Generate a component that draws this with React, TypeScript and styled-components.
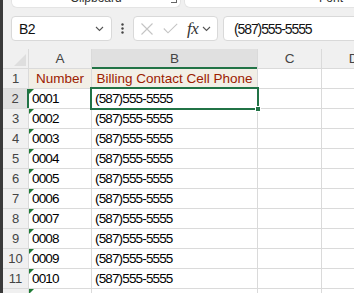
import React from 'react'
import styled, { createGlobalStyle, css } from 'styled-components'

const GRID = '#dadada'
const GREEN = '#217346'

const GlobalStyle = createGlobalStyle`
  html, body {
    margin: 0;
    padding: 0;
    overflow: hidden;
  }
  body {
    font-family: "Liberation Sans", Arial, sans-serif;
    background: #f0f0f0;
  }
`

const Page = styled.div`
  display: flex;
  width: 100vw;
  height: 100vh;
  overflow: hidden;
  background: #f0f0f0;
`

const SideStrip = styled.div`
  width: 3px;
  flex-shrink: 0;
  background: #3a3a3a;
`

const Main = styled.div`
  flex: 1;
  min-width: 0;
  display: flex;
  flex-direction: column;
  overflow: hidden;
`

const Ribbon = styled.div`
  height: 8px;
  display: flex;
  gap: 3px;
  padding-left: 8px;
  flex-shrink: 0;
`

const RibbonGroup = styled.div<{ $width: number }>`
  position: relative;
  width: ${p => p.$width}px;
  flex-shrink: 0;
  height: 8px;
  background: #fff;
  border: 1px solid #e4e4e4;
  border-top: none;
  border-radius: 0 0 6px 6px;
  box-sizing: border-box;
  display: flex;
  justify-content: center;
  align-items: flex-end;
  overflow: hidden;
`

const RibbonLabel = styled.span`
  font-size: 12px;
  line-height: 12px;
  margin-bottom: 3px;
  color: #333;
  white-space: nowrap;
`

const Launcher = styled.span`
  position: absolute;
  right: 3px;
  top: -3px;
  width: 5px;
  height: 5px;
  border-right: 1px solid #666;
  border-bottom: 1px solid #666;
`

const FormulaBar = styled.div`
  margin-top: 8px;
  height: 25px;
  display: flex;
  align-items: center;
  padding-left: 8px;
  flex-shrink: 0;
`

const Field = styled.div`
  height: 25px;
  box-sizing: border-box;
  background: #fff;
  border: 1px solid #d9d9d9;
  border-radius: 4px;
  display: flex;
  align-items: center;
`

const NameBox = styled(Field)`
  width: 101px;
  justify-content: space-between;
  padding: 0 7px;
  font-size: 14px;
  letter-spacing: -0.5px;
  color: #111;
`

const Dots = styled.div`
  width: 21px;
  display: flex;
  justify-content: center;
`

const FuncBox = styled(Field)`
  width: 85px;
  padding: 0 4px 0 6px;
`

const FxText = styled.span`
  font-family: "Liberation Serif", "Times New Roman", serif;
  font-style: italic;
  font-size: 17px;
  color: #333;
  margin-left: 9px;
  letter-spacing: -0.5px;
`

const FormulaInput = styled(Field)`
  flex: 1;
  margin-left: 5px;
  margin-right: -12px;
  padding-left: 10px;
  font-size: 14px;
  letter-spacing: -1.1px;
  color: #111;
`

const Sheet = styled.div`
  margin-top: 8px;
  display: grid;
  grid-template-columns: 25px 62px 165px 63px 63px;
  grid-auto-rows: 19px;
  gap: 1px;
  background: ${GRID};
`

const Corner = styled.div`
  position: relative;
  background: #f0f0f0;
  &::after {
    content: '';
    position: absolute;
    right: 2px;
    bottom: 2px;
    width: 12px;
    height: 12px;
    background: #dedede;
    clip-path: polygon(100% 0, 100% 100%, 0 100%);
  }
`

const ColHead = styled.div<{ $selected?: boolean }>`
  background: ${p => (p.$selected ? '#e0e0e0' : '#f0f0f0')};
  color: #444;
  font-size: 13.5px;
  display: flex;
  align-items: center;
  justify-content: center;
  box-sizing: border-box;
  ${p =>
    p.$selected &&
    css`
      border-bottom: 2px solid ${GREEN};
      margin-bottom: -1px;
    `}
`

const RowHead = styled.div<{ $selected?: boolean }>`
  background: ${p => (p.$selected ? '#e0e0e0' : '#f0f0f0')};
  color: #444;
  font-size: 13px;
  display: flex;
  align-items: flex-end;
  justify-content: center;
  padding-bottom: 2px;
  box-sizing: border-box;
  ${p =>
    p.$selected &&
    css`
      border-right: 2px solid ${GREEN};
      margin-right: -1px;
    `}
`

const Cell = styled.div<{ $title?: boolean; $flag?: boolean; $digits?: boolean; $active?: boolean }>`
  position: relative;
  z-index: ${p => (p.$active ? 2 : 'auto')};
  background: ${p => (p.$title ? '#f2efe6' : '#fff')};
  color: ${p => (p.$title ? '#9c2000' : '#000')};
  display: flex;
  align-items: flex-end;
  justify-content: ${p => (p.$title ? 'center' : 'flex-start')};
  padding: 0 0 2px 3px;
  box-sizing: border-box;
  white-space: nowrap;
  font-size: 13.5px;
  ${p =>
    p.$digits &&
    css`
      letter-spacing: -0.85px;
    `}
  ${p =>
    p.$title &&
    css`
      padding-left: 0;
    `}
  ${p =>
    p.$flag &&
    css`
      &::before {
        content: '';
        position: absolute;
        left: 0;
        top: 0;
        border-top: 5px solid #1e7b34;
        border-right: 5px solid transparent;
      }
    `}
`

const Selection = styled.div`
  position: absolute;
  inset: -2px;
  border: 2px solid ${GREEN};
  pointer-events: none;
`

const FillHandle = styled.div`
  position: absolute;
  right: -4px;
  bottom: -4px;
  width: 6px;
  height: 6px;
  box-sizing: border-box;
  background: ${GREEN};
  border: 1px solid #fff;
`

const Chevron = () => (
  <svg width="9" height="6" viewBox="0 0 9 6">
    <polyline points="1,1 4.5,4.5 8,1" fill="none" stroke="#555" strokeWidth="1.1" />
  </svg>
)

const phone = '(587)555-5555'
const rows = Array.from({ length: 10 }, (_, i) => String(i + 1).padStart(4, '0'))

export default function App() {
  return (
    <>
      <GlobalStyle />
      <Page>
        <SideStrip />
        <Main>
          <Ribbon>
            <RibbonGroup $width={170}>
              <RibbonLabel>Clipboard</RibbonLabel>
              <Launcher />
            </RibbonGroup>
            <RibbonGroup $width={294}>
              <RibbonLabel>Font</RibbonLabel>
            </RibbonGroup>
          </Ribbon>

          <FormulaBar>
            <NameBox>
              <span>B2</span>
              <Chevron />
            </NameBox>
            <Dots>
              <svg width="3" height="11" viewBox="0 0 3 11">
                <circle cx="1.5" cy="1.5" r="1.2" fill="#444" />
                <circle cx="1.5" cy="5.5" r="1.2" fill="#444" />
                <circle cx="1.5" cy="9.5" r="1.2" fill="#444" />
              </svg>
            </Dots>
            <FuncBox>
              <svg width="14" height="12" viewBox="0 0 14 12">
                <path d="M1.5 0.5 L12.5 11.5 M12.5 0.5 L1.5 11.5" stroke="#c4c4c4" strokeWidth="1.1" fill="none" />
              </svg>
              <svg width="15" height="11" viewBox="0 0 15 11" style={{ marginLeft: 9 }}>
                <polyline points="0.8,5.5 5,9.8 14.2,0.8" stroke="#c4c4c4" strokeWidth="1.1" fill="none" />
              </svg>
              <FxText>fx</FxText>
              <span style={{ marginLeft: 4, display: 'flex' }}>
                <Chevron />
              </span>
            </FuncBox>
            <FormulaInput>{phone}</FormulaInput>
          </FormulaBar>

          <Sheet>
            <Corner />
            <ColHead>A</ColHead>
            <ColHead $selected>B</ColHead>
            <ColHead>C</ColHead>
            <ColHead>D</ColHead>

            <RowHead>1</RowHead>
            <Cell $title>Number</Cell>
            <Cell $title>Billing Contact Cell Phone</Cell>
            <Cell />
            <Cell />

            {rows.map((num, i) => (
              <React.Fragment key={num}>
                <RowHead $selected={i === 0}>{i + 2}</RowHead>
                <Cell $flag $digits>{num}</Cell>
                <Cell $digits $active={i === 0}>
                  {phone}
                  {i === 0 && (
                    <>
                      <Selection />
                      <FillHandle />
                    </>
                  )}
                </Cell>
                <Cell />
                <Cell />
              </React.Fragment>
            ))}

            <RowHead>12</RowHead>
            <Cell $flag />
            <Cell />
            <Cell />
            <Cell />
          </Sheet>
        </Main>
      </Page>
    </>
  )
}
